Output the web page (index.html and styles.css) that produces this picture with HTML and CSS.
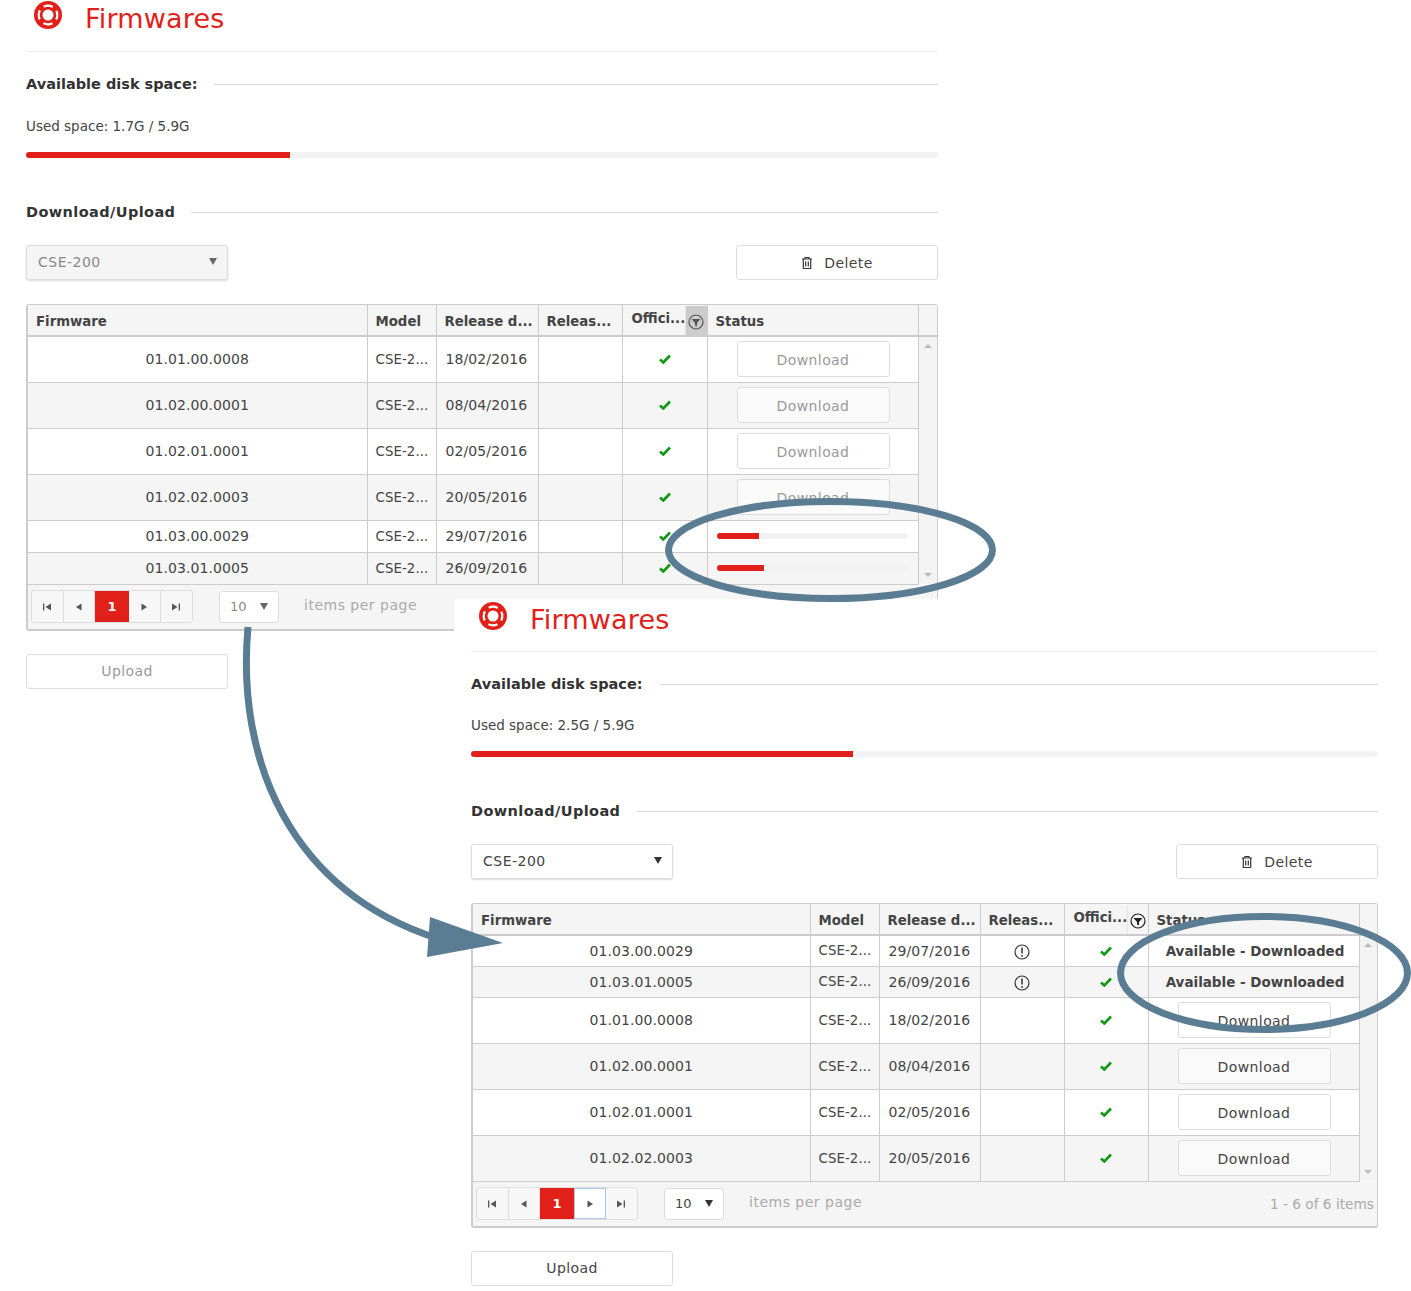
FILE: index.html
```html
<!DOCTYPE html>
<html lang="en">
<head>
  <meta charset="UTF-8" />
  <title>Firmwares</title>
  <link rel="stylesheet" href="styles.css">
</head>
<body>
  <svg width="0" height="0" class="defs">
    <symbol id="buoy" viewBox="0 0 28 28">
      <circle cx="14" cy="14" r="14" fill="#e2201a"/>
      <circle cx="14" cy="14" r="5.500" fill="#fff"/>
      <circle cx="14" cy="14" r="9.300" fill="none" stroke="#fff" stroke-width="2.200" stroke-dasharray="9.400 5.200" stroke-dashoffset="4.700"/>
    </symbol>
    <symbol id="check" viewBox="0 0 12 10">
      <path d="M1 5.500L4.300 8.500 11 1.500" fill="none" stroke="#0f9a12" stroke-width="2.600"/>
    </symbol>
    <symbol id="trash" viewBox="0 0 12 14">
      <path d="M1 3h10M4 3V1.500h4V3M2.300 3v9.500h7.400V3M4.700 5.500v5M7.300 5.500v5" fill="none" stroke="#333" stroke-width="1.200"/>
    </symbol>
    <symbol id="filter" viewBox="0 0 16 16">
      <circle cx="8" cy="8" r="7" fill="none" stroke="currentColor" stroke-width="1.200"/>
      <path d="M3.500 5h9L9 9v3.500L7 11.500V9z" fill="currentColor"/>
    </symbol>
    <symbol id="notice" viewBox="0 0 16 16">
      <circle cx="8" cy="8" r="7" fill="none" stroke="#333" stroke-width="1.200"/>
      <path d="M8 3.500v6M8 11v1.800" fill="none" stroke="#333" stroke-width="1.500"/>
    </symbol>
    <symbol id="first" viewBox="0 0 10 10"><path d="M1 1.500h1.300v7H1zM9 1.500v7L3.500 5z" fill="currentColor"/></symbol>
    <symbol id="prev" viewBox="0 0 10 10"><path d="M7.500 1.500v7L2 5z" fill="currentColor"/></symbol>
    <symbol id="next" viewBox="0 0 10 10"><path d="M2.500 1.500v7L8 5z" fill="currentColor"/></symbol>
    <symbol id="last" viewBox="0 0 10 10"><path d="M9 1.500H7.700v7H9zM1 1.500v7L6.500 5z" fill="currentColor"/></symbol>
  </svg>

  <div class="shot shot-old">
    <h1 class="page-title"><svg class="buoy"><use href="#buoy"/></svg>Firmwares</h1>
    <h2 class="section-head">Available disk space:</h2>
    <p class="used">Used space: 1.7G / 5.9G</p>
    <div class="bar bar-disk"><div class="bar-fill" style="width: 28.9%"></div></div>
    <h2 class="section-head section-gap">Download/Upload</h2>
    <div class="toolbar">
      <div class="select select-wide"><span>CSE-200</span><i class="caret"></i></div>
      <button class="btn"><svg class="trash"><use href="#trash"/></svg>Delete</button>
    </div>
    <div class="grid">
      <table>
        <colgroup><col class="c-fw"><col class="c-model"><col class="c-date"><col class="c-rel"><col class="c-off"><col class="c-status"><col class="c-scroll"></colgroup>
        <thead>
          <tr>
            <th>Firmware</th><th>Model</th><th>Release d...</th><th>Releas...</th>
            <th class="th-off"><div class="off-wrap"><span>Offici...</span><span class="filter filter-on"><svg><use href="#filter"/></svg></span></div></th>
            <th>Status</th><th></th>
          </tr>
        </thead>
        <tbody>
          <tr class="tall"><td class="fw">01.01.00.0008</td><td class="model">CSE-2...</td><td>18/02/2016</td><td></td><td class="mid"><svg class="check"><use href="#check"/></svg></td><td class="mid"><button class="btn btn-row">Download</button></td>
            <td class="scroll" rowspan="6"><div class="scroll-in"><i class="arrow-up"></i><i class="arrow-down"></i></div></td></tr>
          <tr class="tall alt"><td class="fw">01.02.00.0001</td><td class="model">CSE-2...</td><td>08/04/2016</td><td></td><td class="mid"><svg class="check"><use href="#check"/></svg></td><td class="mid"><button class="btn btn-row">Download</button></td></tr>
          <tr class="tall"><td class="fw">01.02.01.0001</td><td class="model">CSE-2...</td><td>02/05/2016</td><td></td><td class="mid"><svg class="check"><use href="#check"/></svg></td><td class="mid"><button class="btn btn-row">Download</button></td></tr>
          <tr class="tall alt"><td class="fw">01.02.02.0003</td><td class="model">CSE-2...</td><td>20/05/2016</td><td></td><td class="mid"><svg class="check"><use href="#check"/></svg></td><td class="mid"><button class="btn btn-row">Download</button></td></tr>
          <tr class="short"><td class="fw">01.03.00.0029</td><td class="model">CSE-2...</td><td>29/07/2016</td><td></td><td class="mid"><svg class="check"><use href="#check"/></svg></td><td class="mid"><div class="bar bar-row"><div class="bar-fill" style="width: 22%"></div></div></td></tr>
          <tr class="short alt"><td class="fw">01.03.01.0005</td><td class="model">CSE-2...</td><td>26/09/2016</td><td></td><td class="mid"><svg class="check"><use href="#check"/></svg></td><td class="mid"><div class="bar bar-row"><div class="bar-fill" style="width: 24.500%"></div></div></td></tr>
        </tbody>
      </table>
      <div class="pager-row">
        <div class="pager">
          <a><svg><use href="#first"/></svg></a><a><svg><use href="#prev"/></svg></a><a class="current">1</a><a><svg><use href="#next"/></svg></a><a><svg><use href="#last"/></svg></a>
        </div>
        <div class="select select-small"><span>10</span><i class="caret"></i></div>
        <span class="per-page">items per page</span>
      </div>
    </div>
    <button class="btn btn-upload">Upload</button>
  </div>

  <div class="shot shot-new">
    <h1 class="page-title"><svg class="buoy"><use href="#buoy"/></svg>Firmwares</h1>
    <h2 class="section-head">Available disk space:</h2>
    <p class="used">Used space: 2.5G / 5.9G</p>
    <div class="bar bar-disk"><div class="bar-fill" style="width: 42.100%"></div></div>
    <h2 class="section-head section-gap">Download/Upload</h2>
    <div class="toolbar">
      <div class="select select-wide"><span>CSE-200</span><i class="caret"></i></div>
      <button class="btn"><svg class="trash"><use href="#trash"/></svg>Delete</button>
    </div>
    <div class="grid">
      <table>
        <colgroup><col class="c-fw"><col class="c-model"><col class="c-date"><col class="c-rel"><col class="c-off"><col class="c-status"><col class="c-scroll"></colgroup>
        <thead>
          <tr>
            <th>Firmware</th><th>Model</th><th>Release d...</th><th>Releas...</th>
            <th class="th-off"><div class="off-wrap"><span>Offici...</span><span class="filter"><svg><use href="#filter"/></svg></span></div></th>
            <th>Status</th><th></th>
          </tr>
        </thead>
        <tbody>
          <tr class="short"><td class="fw">01.03.00.0029</td><td class="model">CSE-2...</td><td>29/07/2016</td><td class="mid"><svg class="notice"><use href="#notice"/></svg></td><td class="mid"><svg class="check"><use href="#check"/></svg></td><td class="mid state">Available - Downloaded</td>
            <td class="scroll" rowspan="6"><div class="scroll-in"><i class="arrow-up"></i><i class="arrow-down"></i></div></td></tr>
          <tr class="short alt"><td class="fw">01.03.01.0005</td><td class="model">CSE-2...</td><td>26/09/2016</td><td class="mid"><svg class="notice"><use href="#notice"/></svg></td><td class="mid"><svg class="check"><use href="#check"/></svg></td><td class="mid state">Available - Downloaded</td></tr>
          <tr class="tall"><td class="fw">01.01.00.0008</td><td class="model">CSE-2...</td><td>18/02/2016</td><td></td><td class="mid"><svg class="check"><use href="#check"/></svg></td><td class="mid"><button class="btn btn-row">Download</button></td></tr>
          <tr class="tall alt"><td class="fw">01.02.00.0001</td><td class="model">CSE-2...</td><td>08/04/2016</td><td></td><td class="mid"><svg class="check"><use href="#check"/></svg></td><td class="mid"><button class="btn btn-row">Download</button></td></tr>
          <tr class="tall"><td class="fw">01.02.01.0001</td><td class="model">CSE-2...</td><td>02/05/2016</td><td></td><td class="mid"><svg class="check"><use href="#check"/></svg></td><td class="mid"><button class="btn btn-row">Download</button></td></tr>
          <tr class="tall alt"><td class="fw">01.02.02.0003</td><td class="model">CSE-2...</td><td>20/05/2016</td><td></td><td class="mid"><svg class="check"><use href="#check"/></svg></td><td class="mid"><button class="btn btn-row">Download</button></td></tr>
        </tbody>
      </table>
      <div class="pager-row">
        <div class="pager">
          <a><svg><use href="#first"/></svg></a><a><svg><use href="#prev"/></svg></a><a class="current">1</a><a class="focus"><svg><use href="#next"/></svg></a><a><svg><use href="#last"/></svg></a>
        </div>
        <div class="select select-small"><span>10</span><i class="caret"></i></div>
        <span class="per-page">items per page</span>
        <span class="page-info">1 - 6 of 6 items</span>
      </div>
    </div>
    <button class="btn btn-upload">Upload</button>
  </div>

  <!-- callouts drawn over both screenshots -->
  <svg class="callouts" width="1411" height="1291" viewBox="0 0 1411 1291">
    <ellipse cx="830.500" cy="550" rx="162" ry="48.500" fill="none" stroke="#5b7d93" stroke-width="7"/>
    <ellipse cx="1264" cy="973" rx="143.500" ry="56.500" fill="none" stroke="#5b7d93" stroke-width="7"/>
    <path d="M248 627C236 760 290 890 436 938" fill="none" stroke="#5b7d93" stroke-width="7"/>
    <path d="M430 917L503 943 427 957z" fill="#5b7d93"/>
  </svg>
</body>
</html>
```

FILE: styles.css
```css
* {
  box-sizing: border-box;
}

html, body {
  margin: 0;
  padding: 0;
}

body {
  position: relative;
  width: 1411px;
  height: 1291px;
  overflow: hidden;
  background: white;
  font-family: "DejaVu Sans", sans-serif;
  font-size: 14px;
  color: #444;
}

.defs {
  position: absolute;
}

/* the two screenshots sit on a free canvas */
.shot {
  position: absolute;
  background: white;
}

.shot-old {
  left: 26px;
  top: 0;
  width: 912px;
}

.shot-new {
  left: 454px;
  top: 599px;
  width: 957px;
  height: 692px;
  padding: 0 33px 0 17px;
}

.page-title {
  display: flex;
  align-items: center;
  height: 52px;
  margin: 0;
  padding: 0 0 14px 8px;
  border-bottom: 1px solid #eee;
  font-size: 27px;
  font-weight: normal;
  letter-spacing: 0.2px;
  color: #e2201a;
}

.shot-new .page-title {
  height: 53px;
  padding-top: 3px;
}

.buoy {
  width: 28px;
  height: 28px;
  margin: -8px 23px 0 0;
}

.section-head {
  display: flex;
  align-items: center;
  gap: 16px;
  height: 20px;
  margin: 22px 0 0;
  font-size: 14.500px;
  font-weight: bold;
  color: #333;
  white-space: nowrap;
}

.section-head::after {
  content: "";
  flex: 1;
  height: 1px;
  background: #ddd;
}

.section-gap {
  margin-top: 44px;
  letter-spacing: 0.4px;
}

.used {
  height: 20px;
  margin: 22px 0 16px;
  font-size: 13.500px;
  line-height: 20px;
  color: #444;
}

.shot-new .used {
  margin-top: 21px;
}

.bar {
  background: #f3f3f3;
  border-radius: 3px;
  overflow: hidden;
}

.bar-disk {
  height: 6px;
}

.bar-fill {
  height: 100%;
  background: #e2201a;
}

.toolbar {
  display: flex;
  justify-content: space-between;
  margin-top: 23px;
}

.select {
  display: flex;
  align-items: center;
  justify-content: space-between;
  background: white;
  border: 1px solid #ddd;
  border-radius: 3px;
  color: #444;
}

.shot-old .select {
  background: #f5f5f5;
  color: #888;
}

.select-wide {
  width: 202px;
  height: 35px;
  padding: 0 10px 2px 11px;
  letter-spacing: 0.5px;
  box-shadow: 0 1px 2px rgba(0,0,0,0.15);
}

.select-small {
  width: 60px;
  height: 32px;
  margin-left: 26px;
  padding: 0 10px;
  font-size: 13px;
}

.shot-old .select-small {
  background: white;
}

.caret {
  width: 0;
  height: 0;
  border-left: 4px solid transparent;
  border-right: 4px solid transparent;
  border-top: 7px solid #333;
}

.shot-old .caret {
  border-top-color: #666;
}

.btn {
  display: flex;
  align-items: center;
  justify-content: center;
  width: 202px;
  height: 35px;
  padding: 0;
  background: white;
  border: 1px solid #ddd;
  border-radius: 3px;
  font-family: inherit;
  font-size: 14px;
  letter-spacing: 0.4px;
  color: #444;
}

.trash {
  width: 12px;
  height: 14px;
  margin-right: 11px;
}

.btn-row {
  width: 153px;
  height: 36px;
  margin-left: 29px;
  padding-top: 2px;
}

.shot-old .btn-row, .shot-old .btn-upload {
  color: #999;
}

.alt .btn-row {
  background: #fafafa;
}

.btn-upload {
  margin-top: 23px;
}

.grid {
  margin-top: 24px;
  background: #f5f5f5;
  border: 1px solid #ccc;
  border-width: 1px 1px 2px 2px;
  border-radius: 3px;
}

table {
  width: 100%;
  table-layout: fixed;
  border-collapse: collapse;
  background: white;
}

.shot-old .c-fw { width: 339px; }
.shot-old .c-date { width: 102px; }
.shot-old .c-off { width: 85px; }

.shot-new .c-fw { width: 337px; }
.shot-new .c-date { width: 101px; }
.shot-new .c-off { width: 84px; }

.c-model { width: 69px; }
.c-rel { width: 84px; }
.c-status { width: 211px; }

th {
  height: 31px;
  padding: 3px 0 0 8px;
  background: #f5f5f5;
  border-bottom: 2px solid #ccc;
  border-right: 1px solid #ccc;
  font-size: 13.300px;
  text-align: left;
  color: #444;
  white-space: nowrap;
  overflow: hidden;
}

th:last-child {
  border-right: none;
}

.th-off {
  padding: 0;
}

.off-wrap {
  display: flex;
  align-items: stretch;
  justify-content: space-between;
  height: 29px;
}

.off-wrap > span:first-child {
  padding: 5px 0 0 9px;
}

.filter {
  display: flex;
  align-items: center;
  justify-content: center;
  width: 24px;
  color: #222;
  border-left: 1px solid #e4e4e4;
}

.filter svg {
  width: 16px;
  height: 16px;
  margin-top: 3px;
}

.filter-on {
  background: #ccc;
  color: #555;
}

td {
  padding: 0 0 0 9px;
  border-bottom: 1px solid #ccc;
  border-right: 1px solid #ccc;
  letter-spacing: 0.1px;
  white-space: nowrap;
  overflow: hidden;
}

.tall td {
  height: 46px;
}

.shot-old .short td {
  height: 32px;
}

.shot-new .short td {
  height: 31px;
}

.alt td {
  background: #f5f5f5;
}

td.fw {
  padding: 0;
  text-align: center;
}

td.model {
  padding-left: 8px;
  font-size: 13.300px;
}

td.mid {
  padding: 0;
  text-align: center;
}

td.state {
  padding-left: 3px;
  font-size: 13.500px;
  font-weight: bold;
  letter-spacing: 0;
}

.check {
  display: block;
  width: 12px;
  height: 10px;
  margin: 0 auto;
}

.notice {
  display: block;
  width: 16px;
  height: 16px;
  margin: 2px auto 0;
}

.bar-row {
  width: 191px;
  height: 6px;
  margin: 0 auto;
}

td.scroll {
  position: relative;
  padding: 0;
  background: #f3f3f3;
  border: none;
}

.scroll-in {
  position: absolute;
  inset: 0;
  display: flex;
  flex-direction: column;
  align-items: center;
  justify-content: space-between;
  padding: 7px 0 7px;
}

.arrow-up {
  border-left: 4.500px solid transparent;
  border-right: 4.500px solid transparent;
  border-bottom: 4px solid #bbb;
}

.arrow-down {
  border-left: 4.500px solid transparent;
  border-right: 4.500px solid transparent;
  border-top: 4px solid #bbb;
}

.pager-row {
  display: flex;
  align-items: center;
  height: 44px;
  padding: 0 3px;
}

.pager {
  display: flex;
  height: 33px;
  background: #f7f7f7;
  border: 1px solid #ddd;
  border-radius: 3px;
}

.pager a {
  display: flex;
  align-items: center;
  justify-content: center;
  width: 31.500px;
  border-right: 1px solid #ddd;
  color: #555;
}

.pager a:last-child {
  border-right: none;
}

.pager svg {
  width: 10px;
  height: 10px;
}

.pager a.current {
  width: 34px;
  background: #e2201a;
  border-right: none;
  font-weight: bold;
  font-size: 13px;
  color: white;
}

.pager a.focus {
  border: 1px solid #a9c6f0;
  background: white;
}

.per-page {
  margin: -4px 0 0 25px;
  letter-spacing: 0.5px;
  color: #aaa;
}

.page-info {
  margin-left: auto;
  font-size: 13.700px;
  color: #aaa;
}

.callouts {
  position: absolute;
  left: 0;
  top: 0;
}
```
